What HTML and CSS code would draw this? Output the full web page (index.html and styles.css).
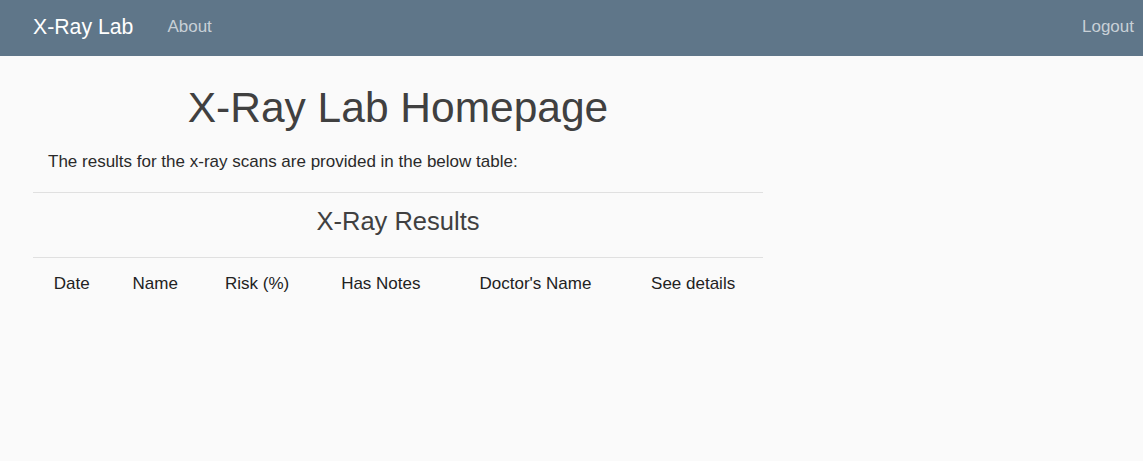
FILE: index.html
```html
<!DOCTYPE html>
<html lang="en">
<head>
<meta charset="utf-8">
<title>X-Ray Lab</title>
<link rel="stylesheet" href="styles.css">
</head>
<body>
<nav class="navbar">
  <div class="nav-left">
    <a class="brand" href="#">X-Ray Lab</a>
    <a class="nav-link" href="#">About</a>
  </div>
  <a class="nav-link logout" href="#">Logout</a>
</nav>
<main class="content">
  <h1 class="title">X-Ray Lab Homepage</h1>
  <p class="intro">The results for the x-ray scans are provided in the below table:</p>
  <hr class="divider">
  <h3 class="subtitle">X-Ray Results</h3>
  <hr class="divider">
  <table class="results">
    <thead>
      <tr>
        <th>Date</th>
        <th>Name</th>
        <th>Risk (%)</th>
        <th>Has Notes</th>
        <th>Doctor's Name</th>
        <th>See details</th>
      </tr>
    </thead>
    <tbody></tbody>
  </table>
</main>
</body>
</html>
```
FILE: styles.css
```css
* { box-sizing: border-box; }
html { font-size: 17px; }
html, body {
  margin: 0;
  padding: 0;
  background: #fafafa;
  font-family: "Liberation Sans", Arial, sans-serif;
  color: #222;
}
a { text-decoration: none; }
.navbar {
  height: 56px;
  background: #5f7689;
  display: flex;
  align-items: center;
  justify-content: space-between;
  padding: 0 9px 3px 33px;
}
.nav-left {
  display: flex;
  align-items: center;
  gap: 34px;
}
.brand {
  color: #ffffff;
  font-size: 1.25rem;
  line-height: 30px;
}
.nav-link {
  color: #c8d0d7;
  font-size: 1rem;
  line-height: 24px;
}
.content {
  width: 730px;
  margin-left: 33px;
  padding-top: 28px;
}
.title {
  margin: 0 0 17px;
  text-align: center;
  font-size: 2.5rem;
  line-height: 48px;
  font-weight: 400;
  color: #404040;
}
.intro {
  margin: 0 0 17px;
  padding-left: 15px;
  font-size: 1rem;
  line-height: 25.5px;
  color: #2a2a2a;
}
.divider {
  margin: 0;
  border: 0;
  border-top: 1px solid #e0e0e0;
}
.subtitle {
  margin: 0;
  padding: 13px 0 20px;
  text-align: center;
  font-size: 1.5rem;
  line-height: 31px;
  font-weight: 400;
  color: #404040;
}
.results {
  width: 100%;
  border-collapse: collapse;
}
.results th {
  padding: 13px 12px 12px;
  font-size: 1rem;
  line-height: 25.5px;
  font-weight: 400;
  text-align: center;
  color: #222;
}
```
